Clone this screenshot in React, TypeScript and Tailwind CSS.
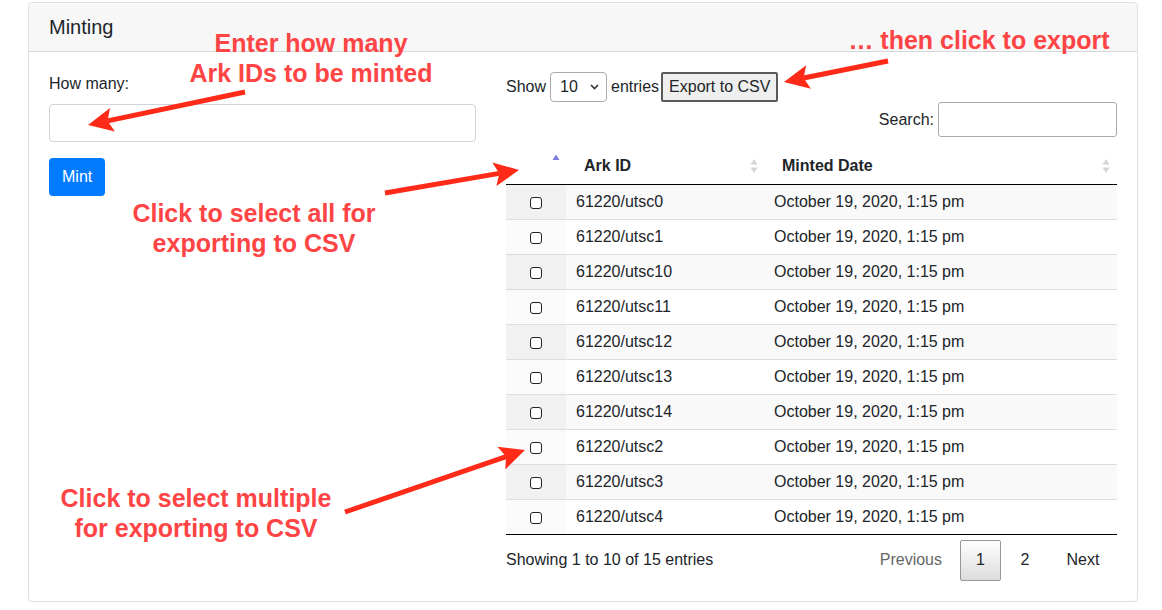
import React from "react";

type Pt = [number, number];

// arrow head polygon for a skitch-style arrow
function headPoints(tail: Pt, tip: Pt, len = 25, width = 24, notch = 5) {
  const dx = tip[0] - tail[0];
  const dy = tip[1] - tail[1];
  const d = Math.hypot(dx, dy);
  const ux = dx / d;
  const uy = dy / d;
  const nx = -uy;
  const ny = ux;
  const bx = tip[0] - ux * len;
  const by = tip[1] - uy * len;
  const b1: Pt = [bx + nx * (width / 2), by + ny * (width / 2)];
  const b2: Pt = [bx - nx * (width / 2), by - ny * (width / 2)];
  const back: Pt = [tip[0] - ux * (len - notch), tip[1] - uy * (len - notch)];
  return {
    points: [tip, b1, back, b2].map((p) => p.join(",")).join(" "),
    end: back,
  };
}

const arrows: { tail: Pt; tip: Pt }[] = [
  { tail: [245, 92], tip: [88, 125] },
  { tail: [888, 61], tip: [784, 82] },
  { tail: [385, 193], tip: [519, 170] },
  { tail: [345, 512], tip: [525, 450] },
];

const rows = ["0", "1", "10", "11", "12", "13", "14", "2", "3", "4"];

function SortPair() {
  return (
    <svg width="8" height="16" viewBox="0 0 8 16" className="shrink-0">
      <path d="M4 1 L7.5 6.5 L0.5 6.5 Z" fill="#d6d6d6" />
      <path d="M4 15 L7.5 9.5 L0.5 9.5 Z" fill="#d6d6d6" />
    </svg>
  );
}

export default function App() {
  return (
    <div className="relative min-h-screen w-[1162px] h-[610px] bg-white text-[#212529] font-['Liberation_Sans',Arial,sans-serif] overflow-hidden">
      <div className="pt-[2px] pl-[28px]">
        {/* Card */}
        <div className="w-[1110px] h-[600px] border border-[rgba(0,0,0,0.125)] rounded-[4px] flex flex-col">
          <div className="h-[49px] px-5 flex items-center bg-[#f7f7f7] border-b border-[rgba(0,0,0,0.125)] text-[20px] rounded-t-[4px]">
            Minting
          </div>

          <div className="flex-1 p-5 flex gap-[30px]">
            {/* Left form */}
            <div className="w-[427px]">
              <div className="text-base leading-6 mb-2">How many:</div>
              <div className="h-[38px] border border-[#ced4da] rounded-[4px] bg-white" />
              <button className="mt-4 h-[38px] px-[13px] bg-[#007bff] text-white text-base rounded-[4px]">
                Mint
              </button>
            </div>

            {/* Right table */}
            <div className="flex-1 flex flex-col">
              <div className="h-[30px] flex items-center text-base">
                <span>Show</span>
                <div className="ml-[4px] w-[57px] h-[30px] border border-[#aaa] rounded-[4px] flex items-center justify-between pl-[9px] pr-[7px] bg-white">
                  <span>10</span>
                  <svg width="9" height="6" viewBox="0 0 9 6">
                    <path d="M1 1 L4.5 4.5 L8 1" fill="none" stroke="#333" strokeWidth="1.6" />
                  </svg>
                </div>
                <span className="ml-[4px]">entries</span>
                <button className="ml-[2px] h-[30px] px-[6px] bg-[#efefef] border-2 border-[#5a5a5a] rounded-[2px] text-base">
                  Export to CSV
                </button>
              </div>

              <div className="h-[35px] flex items-center justify-end text-base">
                <span className="mr-[4px]">Search:</span>
                <div className="w-[179px] h-[35px] border border-[#aaa] rounded-[3px] bg-white" />
              </div>

              <table className="mt-[11px] w-full border-collapse text-base border-b border-black">
                <thead>
                  <tr className="h-[36px] border-b border-black">
                    <th className="w-[60px] p-0">
                      <div className="flex justify-end pr-[6px] -mt-[12px]">
                        <svg width="8" height="7" viewBox="0 0 8 7">
                          <path d="M4 0.5 L7.5 6 L0.5 6 Z" fill="#7d7de0" />
                        </svg>
                      </div>
                    </th>
                    <th className="w-[198px] p-0 font-bold text-left">
                      <div className="flex items-center justify-between pl-[18px] pr-[6px]">
                        <span>Ark ID</span>
                        <SortPair />
                      </div>
                    </th>
                    <th className="p-0 font-bold text-left">
                      <div className="flex items-center justify-between pl-[18px] pr-[7px]">
                        <span>Minted Date</span>
                        <SortPair />
                      </div>
                    </th>
                  </tr>
                </thead>
                <tbody>
                  {rows.map((r, i) => {
                    const odd = i % 2 === 0;
                    const border = i > 0 ? "border-t border-[#ddd]" : "";
                    return (
                      <tr key={r} className={`h-[35px] ${odd ? "bg-[#f9f9f9]" : "bg-white"}`}>
                        <td className={`p-0 ${border} ${odd ? "bg-[#f1f1f1]" : "bg-[#fafafa]"}`}>
                          <div className="flex justify-center pt-[2px]">
                            <div className="w-[12px] h-[12px] rounded-[3px] border border-[#222] bg-white" />
                          </div>
                        </td>
                        <td className={`px-[10px] py-0 ${border}`}>61220/utsc{r}</td>
                        <td className={`px-[10px] py-0 ${border}`}>October 19, 2020, 1:15 pm</td>
                      </tr>
                    );
                  })}
                </tbody>
              </table>

              <div className="mt-[5px] h-[41px] flex items-center justify-between text-base">
                <span>Showing 1 to 10 of 15 entries</span>
                <div className="flex items-center gap-[2px]">
                  <span className="h-[41px] px-4 flex items-center text-[#666]">Previous</span>
                  <span className="h-[41px] w-[41px] flex items-center justify-center border border-[#979797] rounded-[2px] bg-gradient-to-b from-white to-[#dcdcdc]">
                    1
                  </span>
                  <span className="h-[41px] w-[44px] flex items-center justify-center">2</span>
                  <span className="h-[41px] w-[68px] flex items-center justify-center">Next</span>
                </div>
              </div>
            </div>
          </div>
        </div>
      </div>

      {/* Annotations over the screenshot */}
      <div className="absolute left-[161px] top-[28px] w-[300px] text-center font-bold text-[25px] leading-[30px] text-[#fe4444]">
        <div>Enter how many</div>
        <div>Ark IDs to be minted</div>
      </div>
      <div className="absolute left-[829px] top-[25px] w-[300px] text-center font-bold text-[25px] leading-[30px] text-[#fe4444]">
        … then click to export
      </div>
      <div className="absolute left-[104px] top-[198px] w-[300px] text-center font-bold text-[25px] leading-[30px] text-[#fe4444]">
        <div>Click to select all for</div>
        <div>exporting to CSV</div>
      </div>
      <div className="absolute left-[46px] top-[483px] w-[300px] text-center font-bold text-[25px] leading-[30px] text-[#fe4444]">
        <div>Click to select multiple</div>
        <div>for exporting to CSV</div>
      </div>

      <svg className="absolute inset-0 pointer-events-none" width="1162" height="610">
        {arrows.map((a, i) => {
          const h = headPoints(a.tail, a.tip);
          return (
            <g key={i} fill="#ff2a18" stroke="#ff2a18">
              <line x1={a.tail[0]} y1={a.tail[1]} x2={h.end[0]} y2={h.end[1]} strokeWidth="5" />
              <polygon points={h.points} strokeWidth="0" />
            </g>
          );
        })}
      </svg>
    </div>
  );
}
